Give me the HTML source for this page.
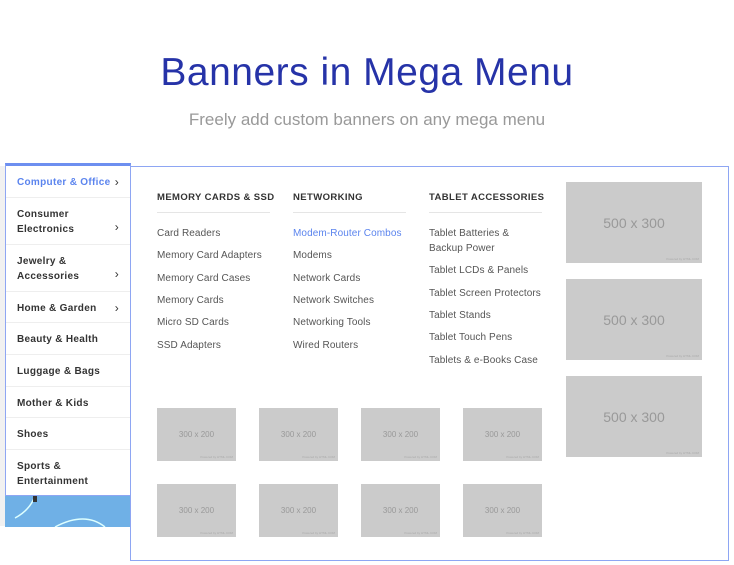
<!DOCTYPE html>
<html><head><meta charset="utf-8"><style>
*{margin:0;padding:0;box-sizing:border-box}
body{width:734px;height:565px;background:#fff;position:relative;overflow:hidden;font-family:"Liberation Sans",sans-serif}
.abs{position:absolute}
h1{position:absolute;left:0;width:734px;top:51px;text-align:center;font-weight:normal;font-size:39px;color:#2633a8;letter-spacing:0.5px}
.sub{position:absolute;left:0;width:734px;top:110px;text-align:center;font-size:17px;color:#999}
.side{left:5px;top:163px;width:126px;height:333px;border:1px solid #8ea6f3;border-top:3px solid #6d8ff0;background:#fff}
.it{position:absolute;left:0;width:124px;border-bottom:1px solid #eee;font-size:10px;color:#333;font-weight:bold;letter-spacing:0.3px;padding-left:11px;padding-top:2px;line-height:15px;display:flex;align-items:center}
.it .ar{position:absolute;right:11px;font-weight:normal;font-size:12px}
.panel{left:130px;top:166px;width:599px;height:395px;border:1px solid #8ea6f3;background:#fff}
.hd{position:absolute;top:192px;font-size:9.5px;font-weight:bold;color:#333;letter-spacing:0.4px}
.ul{position:absolute;top:212px;height:1px;background:#e5e5e5}
.lk{position:absolute;font-size:10px;color:#555;letter-spacing:0.1px;line-height:15px;margin-top:1px}
.ph{position:absolute;background:#cbcbcb;color:#999;display:flex;align-items:center;justify-content:center}
.ph i{position:absolute;right:3px;bottom:2px;font-size:3px;font-style:normal;color:#aaa}
</style></head><body>
<h1>Banners in Mega Menu</h1>
<div class="sub">Freely add custom banners on any mega menu</div>
<div class="abs" style="left:0;top:166px;width:5px;height:360px;background:#f1f1f1"></div>
<div class="abs side">
<div class="it" style="top:0;height:32px;color:#5b84ee">Computer &amp; Office<span class="ar" style="color:#333">›</span></div>
<div class="it" style="top:32px;height:47px">Consumer<br>Electronics<span class="ar" style="top:22px">›</span></div>
<div class="it" style="top:79px;height:47px">Jewelry &amp;<br>Accessories<span class="ar" style="top:22px">›</span></div>
<div class="it" style="top:126px;height:31px">Home &amp; Garden<span class="ar">›</span></div>
<div class="it" style="top:157px;height:32px">Beauty &amp; Health</div>
<div class="it" style="top:189px;height:32px">Luggage &amp; Bags</div>
<div class="it" style="top:221px;height:31px">Mother &amp; Kids</div>
<div class="it" style="top:252px;height:32px">Shoes</div>
<div class="it" style="top:284px;height:46px;border-bottom:none">Sports &amp;<br>Entertainment</div>
</div>
<div class="abs" style="left:5px;top:496px;width:125px;height:31px;background:#6fb0e6;overflow:hidden">
<svg width="125" height="31"><path d="M30 0 Q25 14 10 22" stroke="#dff" stroke-width="1.5" fill="none"/><path d="M50 31 Q80 15 100 31" stroke="#dff" stroke-width="1.5" fill="none"/><rect x="28" y="0" width="4" height="6" fill="#333"/></svg>
</div>
<div class="abs panel"></div>
<div class="hd" style="left:157px">MEMORY CARDS &amp; SSD</div>
<div class="ul" style="left:157px;width:113px"></div>
<div class="hd" style="left:293px">NETWORKING</div>
<div class="ul" style="left:293px;width:113px"></div>
<div class="hd" style="left:429px">TABLET ACCESSORIES</div>
<div class="ul" style="left:429px;width:113px"></div>
<div class="lk" style="left:157px;top:225px">Card Readers</div>
<div class="lk" style="left:157px;top:247px">Memory Card Adapters</div>
<div class="lk" style="left:157px;top:270px">Memory Card Cases</div>
<div class="lk" style="left:157px;top:292px">Memory Cards</div>
<div class="lk" style="left:157px;top:314px">Micro SD Cards</div>
<div class="lk" style="left:157px;top:337px">SSD Adapters</div>
<div class="lk" style="left:293px;top:225px;color:#5b84ee">Modem-Router Combos</div>
<div class="lk" style="left:293px;top:247px">Modems</div>
<div class="lk" style="left:293px;top:270px">Network Cards</div>
<div class="lk" style="left:293px;top:292px">Network Switches</div>
<div class="lk" style="left:293px;top:314px">Networking Tools</div>
<div class="lk" style="left:293px;top:337px">Wired Routers</div>
<div class="lk" style="left:429px;top:225px">Tablet Batteries &amp;<br>Backup Power</div>
<div class="lk" style="left:429px;top:262px">Tablet LCDs &amp; Panels</div>
<div class="lk" style="left:429px;top:285px">Tablet Screen Protectors</div>
<div class="lk" style="left:429px;top:307px">Tablet Stands</div>
<div class="lk" style="left:429px;top:329px">Tablet Touch Pens</div>
<div class="lk" style="left:429px;top:352px">Tablets &amp; e-Books Case</div>
<div class="ph" style="left:566px;top:182px;width:136px;height:81px;font-size:14px">500 x 300<i>Powered by HTML.COM</i></div>
<div class="ph" style="left:566px;top:279px;width:136px;height:81px;font-size:14px">500 x 300<i>Powered by HTML.COM</i></div>
<div class="ph" style="left:566px;top:376px;width:136px;height:81px;font-size:14px">500 x 300<i>Powered by HTML.COM</i></div>
<div class="ph" style="left:157px;top:408px;width:79px;height:53px;font-size:8px">300 x 200<i>Powered by HTML.COM</i></div>
<div class="ph" style="left:259px;top:408px;width:79px;height:53px;font-size:8px">300 x 200<i>Powered by HTML.COM</i></div>
<div class="ph" style="left:361px;top:408px;width:79px;height:53px;font-size:8px">300 x 200<i>Powered by HTML.COM</i></div>
<div class="ph" style="left:463px;top:408px;width:79px;height:53px;font-size:8px">300 x 200<i>Powered by HTML.COM</i></div>
<div class="ph" style="left:157px;top:484px;width:79px;height:53px;font-size:8px">300 x 200<i>Powered by HTML.COM</i></div>
<div class="ph" style="left:259px;top:484px;width:79px;height:53px;font-size:8px">300 x 200<i>Powered by HTML.COM</i></div>
<div class="ph" style="left:361px;top:484px;width:79px;height:53px;font-size:8px">300 x 200<i>Powered by HTML.COM</i></div>
<div class="ph" style="left:463px;top:484px;width:79px;height:53px;font-size:8px">300 x 200<i>Powered by HTML.COM</i></div>
</body></html>
